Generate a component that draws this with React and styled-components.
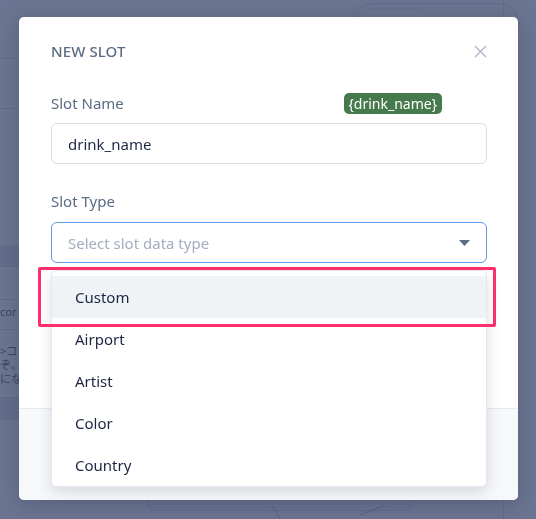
import React, { useState } from 'react';
import styled, { createGlobalStyle } from 'styled-components';

const GlobalStyle = createGlobalStyle`
    html, body {
        margin: 0;
        padding: 0;
        height: 100%;
    }
    body {
        font-family: "Noto Sans", "Open Sans", sans-serif;
        background: #6b7591;
        overflow: hidden;
    }
`;

// page behind the dialog, already dimmed by the overlay

const Page = styled.div`
    position: relative;
    height: 519px;
    display: grid;
    grid-template-columns: 1fr 33px;
    background: #6b7591;
`;

const PageMain = styled.div`
    display: flex;
    flex-direction: column;
`;

const PageHeader = styled.div`
    height: 59px;
    border-bottom: 1px solid #626b88;
    display: flex;
    justify-content: flex-end;
    padding: 3px 0 0;
    box-sizing: border-box;
`;

const Pill = styled.div`
    width: 165px;
    height: 40px;
    border: 1px solid #626b88;
    border-radius: 20px;
    margin-right: -16px;
    display: flex;
`;

const PillTab = styled.div`
    width: 82px;
    height: 100%;
    border-radius: 20px;
    border: 1px solid #66708c;
    box-sizing: border-box;
    margin-top: 4px;
`;

const Row = styled.div`
    height: ${p => p.h}px;
    border-bottom: 1px solid #626b88;
    background: ${p => (p.dark ? '#646d8a' : 'transparent')};
    color: #3d4560;
    font-family: "Noto Sans", "Noto Sans CJK JP", sans-serif;
    font-size: 11px;
    line-height: 14px;
    padding: ${p => p.pad || 0}px 0 0 0;
    box-sizing: border-box;
    white-space: nowrap;
    overflow: hidden;
`;

const SideRail = styled.div`
    border-left: 1px solid #626b88;
`;

const NodeCard = styled.div`
    position: absolute;
    left: 148px;
    top: 470px;
    width: 263px;
    height: 41px;
    border: 1px solid #626b88;
    border-radius: 5px;
    padding: 0 10px 11px;
    box-sizing: border-box;
    display: flex;
    align-items: flex-end;
`;

const NodeBar = styled.div`
    flex: 1;
    height: 20px;
    background: #58638a;
    border-radius: 0 0 4px 4px;
`;

const Connectors = styled.svg`
    position: absolute;
    left: 260px;
    top: 505px;
`;

// modal

const Overlay = styled.div`
    position: fixed;
    inset: 0;
    display: flex;
    align-items: flex-start;
    padding: 17px 0 0 19px;
`;

const Modal = styled.div`
    width: 499px;
    height: 483px;
    background: #ffffff;
    border-radius: 5px;
    box-shadow: 0 4px 20px rgba(20, 30, 60, 0.25);
    display: flex;
    flex-direction: column;
`;

const ModalHeader = styled.div`
    display: flex;
    justify-content: space-between;
    align-items: center;
    padding: 23px 31px 0 32px;
    height: 45px;
    box-sizing: border-box;
`;

const Title = styled.h2`
    margin: 0;
    font-size: 15px;
    font-weight: 500;
    line-height: 20px;
    color: #5b6b83;
    letter-spacing: 0.1px;
    text-transform: uppercase;
`;

const CloseButton = styled.button`
    border: 0;
    background: none;
    padding: 0;
    width: 14px;
    height: 14px;
    display: flex;
    align-items: center;
    justify-content: center;
    cursor: pointer;
`;

const ModalBody = styled.div`
    flex: 1;
    padding: 31px 31px 0 32px;
    display: flex;
    flex-direction: column;
`;

const Field = styled.div`
    display: flex;
    flex-direction: column;
    margin-bottom: ${p => p.gap || 0}px;
`;

const LabelRow = styled.div`
    display: flex;
    align-items: center;
    justify-content: space-between;
    height: 21px;
    margin-bottom: ${p => p.mb}px;
    padding-right: 45px;
`;

const Label = styled.label`
    font-size: 15px;
    line-height: 21px;
    color: #5b6b83;
`;

const Badge = styled.span`
    background: #467a4d;
    color: #ffffff;
    font-size: 14px;
    line-height: 21px;
    height: 21px;
    padding: 0 5px;
    border-radius: 5px;
`;

const Input = styled.input`
    height: 41px;
    box-sizing: border-box;
    border: 1px solid #d7dfe9;
    border-radius: 6px;
    padding: 0 16px;
    font-family: inherit;
    font-size: 15px;
    color: #1e2a44;
    outline: none;
`;

const SelectWrap = styled.div`
    position: relative;
`;

const SelectBox = styled.div`
    height: 41px;
    box-sizing: border-box;
    border: 1px solid #5d9be6;
    border-radius: 6px;
    padding: 0 16px;
    display: flex;
    align-items: center;
    justify-content: space-between;
    font-size: 15px;
    color: #a3afc0;
    cursor: pointer;
`;

const Menu = styled.ul`
    position: absolute;
    left: 0;
    right: 0;
    top: calc(100% + 7px);
    margin: 0;
    padding: 5px 0 0;
    list-style: none;
    background: #ffffff;
    border: 1px solid #e3e8ee;
    border-radius: 5px;
    box-shadow: 0 5px 14px rgba(40, 55, 90, 0.16);
    z-index: 2;
`;

const Option = styled.li`
    height: 42px;
    display: flex;
    align-items: center;
    padding: 0 23px;
    font-size: 15px;
    color: #1c2543;
    background: ${p => (p.active ? '#eff3f6' : 'transparent')};
`;

const Highlight = styled.div`
    position: absolute;
    left: -13px;
    top: 45px;
    width: 458px;
    height: 60px;
    box-sizing: border-box;
    border: 3px solid #fd2e6c;
    border-radius: 2px;
    z-index: 3;
    pointer-events: none;
`;

const ModalFooter = styled.div`
    height: 91px;
    background: #f7f8fa;
    border-top: 1px solid #e7eaf0;
    border-radius: 0 0 5px 5px;
`;

const types = ['Custom', 'Airport', 'Artist', 'Color', 'Country'];

const App = () => {
    const [name, setName] = useState('drink_name');
    const [open] = useState(true);

    return (
        <>
            <GlobalStyle />
            <Page>
                <PageMain>
                    <PageHeader>
                        <Pill>
                            <PillTab />
                        </Pill>
                    </PageHeader>
                    <Row h={50} />
                    <Row h={138} />
                    <Row h={20} dark />
                    <Row h={33} />
                    <Row h={30} pad={5}>cor</Row>
                    <Row h={68} pad={14}>
                        &gt;コ<br />
                        ぞ。<br />
                        にな
                    </Row>
                    <Row h={22} dark />
                </PageMain>
                <SideRail />
                <NodeCard>
                    <NodeBar />
                </NodeCard>
                <Connectors width="130" height="14" viewBox="0 0 130 14">
                    <path d="M12 0 L20 14" stroke="#5a6380" strokeWidth="1" fill="none" />
                    <path d="M125 0 L100 10" stroke="#5a6380" strokeWidth="1" fill="none" />
                </Connectors>
            </Page>

            <Overlay>
                <Modal>
                    <ModalHeader>
                        <Title>New Slot</Title>
                        <CloseButton aria-label="Close">
                            <svg width="13" height="13" viewBox="0 0 13 13">
                                <path d="M1 1 L12 12 M12 1 L1 12" stroke="#adb7c4" strokeWidth="1.4" fill="none" />
                            </svg>
                        </CloseButton>
                    </ModalHeader>
                    <ModalBody>
                        <Field gap={27}>
                            <LabelRow mb={9}>
                                <Label>Slot Name</Label>
                                <Badge>{`{${name}}`}</Badge>
                            </LabelRow>
                            <Input value={name} onChange={e => setName(e.target.value)} />
                        </Field>
                        <Field>
                            <LabelRow mb={10}>
                                <Label>Slot Type</Label>
                            </LabelRow>
                            <SelectWrap>
                                <SelectBox>
                                    <span>Select slot data type</span>
                                    <svg width="11" height="6" viewBox="0 0 11 6">
                                        <path d="M0 0 H11 L5.5 6 Z" fill="#5f6d84" />
                                    </svg>
                                </SelectBox>
                                {open && (
                                    <Menu>
                                        {types.map((t, i) => (
                                            <Option key={t} active={i === 0}>{t}</Option>
                                        ))}
                                    </Menu>
                                )}
                                <Highlight />
                            </SelectWrap>
                        </Field>
                    </ModalBody>
                    <ModalFooter />
                </Modal>
            </Overlay>
        </>
    );
};

export default App;
